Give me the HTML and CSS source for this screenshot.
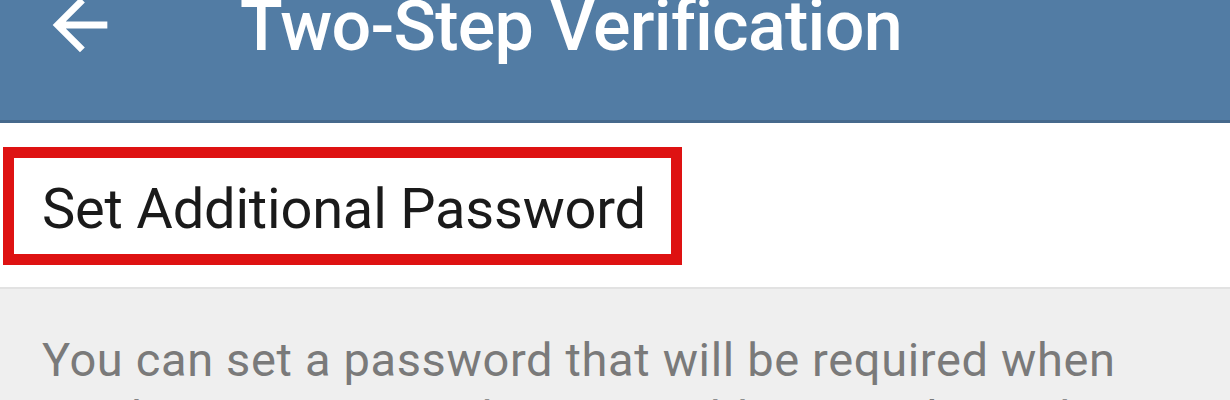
FILE: index.html
```html
<!DOCTYPE html>
<html lang="en">
<head>
  <meta charset="UTF-8" />
  <meta name="viewport" content="width=device-width, initial-scale=1.0">
  <title>Two-Step Verification</title>
  <link rel="stylesheet" href="styles.css">
</head>
<body>
  <div class="toolbar">
    <svg class="back" viewBox="0 0 24 24" width="82" height="82">
      <path d="M20 11H7.83l5.59-5.59L12 4l-8 8 8 8 1.41-1.41L7.83 13H20v-2z" fill="#ffffff" />
    </svg>
    <h1 class="title">Two-Step Verification</h1>
  </div>

  <div class="section">
    <div class="highlight">
      <span class="row-text">Set Additional Password</span>
    </div>
  </div>

  <div class="info">
    You can set a password that will be required when
    you log in on a new device in addition to the code you get in the SMS.
  </div>
</body>
</html>
```

FILE: styles.css
```css
html, body {
  margin: 0;
  padding: 0;
  background-color: #EFEFEF;
  font-family: Roboto, 'Noto Sans', sans-serif;
}
.toolbar {
  display: flex;
  align-items: flex-start;
  height: 120px;
  padding-left: 39px;
  background-color: #527CA4;
  border-bottom: 3px solid #46698C;
  overflow: hidden;
}
.back {
  flex: none;
  margin-top: -16px;
}
.title {
  margin: -9px 0 0 119px;
  font-size: 70px;
  line-height: 70px;
  font-weight: 500;
  letter-spacing: -0.7px;
  color: #FFFFFF;
  white-space: nowrap;
}
.section {
  background-color: #FFFFFF;
  padding: 24px 0 22px 3px;
  border-bottom: 2px solid #E2E2E2;
}
.highlight {
  width: 657px;
  height: 73px;
  padding: 23px 0 0 0;
  border: 11px solid #DE1212;
}
.row-text {
  display: block;
  padding-left: 28px;
  font-size: 56px;
  line-height: 56px;
  letter-spacing: -0.2px;
  color: #1A1A1A;
  white-space: nowrap;
}
.info {
  padding: 42px 80px 0 42px;
  font-size: 47px;
  line-height: 58px;
  letter-spacing: 0.65px;
  color: #7A7A7A;
}
```
